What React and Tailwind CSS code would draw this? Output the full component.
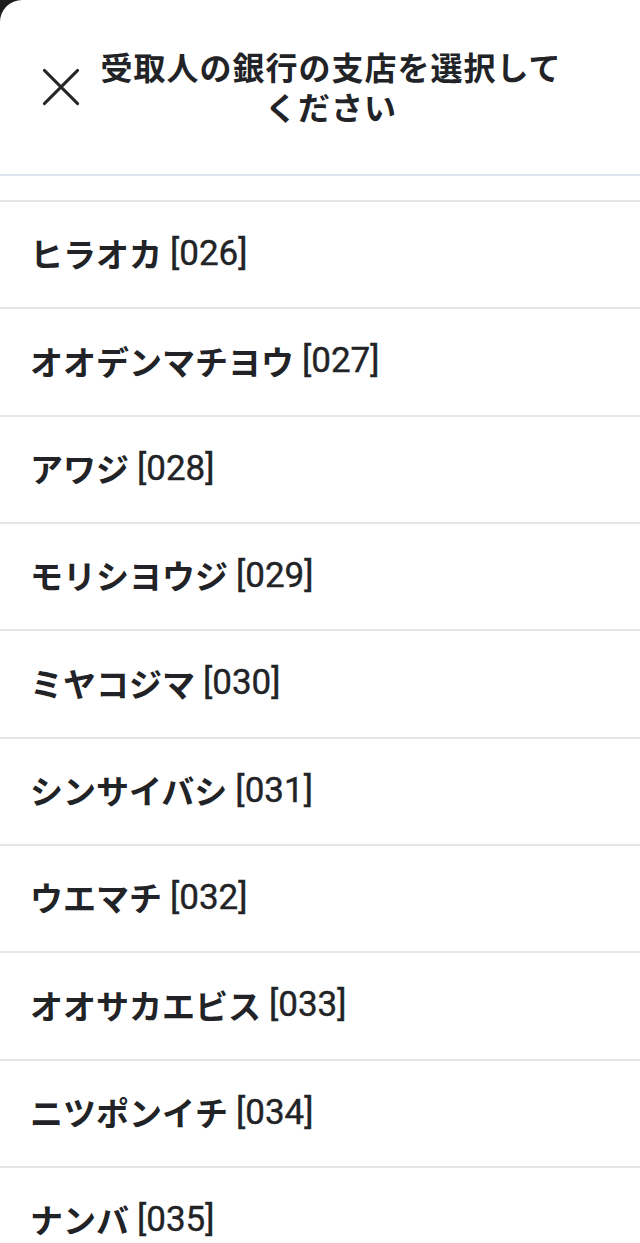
import React from "react";

const branches = [
  ["ヒラオカ", "026"],
  ["オオデンマチヨウ", "027"],
  ["アワジ", "028"],
  ["モリシヨウジ", "029"],
  ["ミヤコジマ", "030"],
  ["シンサイバシ", "031"],
  ["ウエマチ", "032"],
  ["オオサカエビス", "033"],
  ["ニツポンイチ", "034"],
  ["ナンバ", "035"],
];

export default function App() {
  return (
    <div className="h-[1243px] overflow-hidden bg-[#1c1c1c] font-['Roboto','Noto_Sans_CJK_JP',sans-serif] text-[#222326]">
      <div className="h-full bg-white rounded-tl-[22px]">
        {/* Header */}
        <div className="h-[176px] flex items-center border-b-2 border-[#dfe5ee]">
          <button className="w-[90px] h-full flex items-center justify-end pr-[8px]">
            <svg width="42" height="42" viewBox="0 0 24 24" fill="none" stroke="#262626" strokeWidth="1.7" strokeLinecap="round">
              <path d="M2.5 2.5l19 19M21.5 2.5l-19 19" />
            </svg>
          </button>
          <h1 className="flex-1 pr-[68px] text-center text-[32px] leading-[40px] font-bold tracking-[1px] font-['Noto_Sans_CJK_JP',sans-serif] mt-[-2px]">
            受取人の銀行の支店を選択してください
          </h1>
        </div>

        <div className="h-[24px]" />

        {/* Branch list */}
        <ul>
          {branches.map(([name, code]) => (
            <li
              key={code}
              className="h-[107.33px] border-t-2 border-[#e6e6e6] flex items-center pl-[30px] pb-[1px]"
            >
              <span className="text-[33px] font-bold font-['Noto_Sans_CJK_JP',sans-serif]">{name}</span>
              <span className="text-[35px] font-normal font-['Roboto',sans-serif] ml-[8px] [-webkit-text-stroke:0.4px_#222326]">[{code}]</span>
            </li>
          ))}
        </ul>
      </div>
    </div>
  );
}
